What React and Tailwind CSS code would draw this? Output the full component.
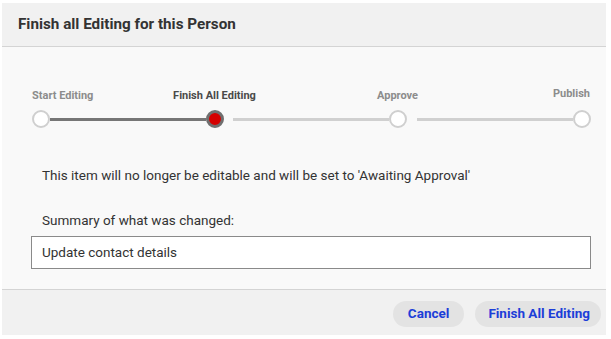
const steps = [
  { label: "Start Editing", state: "done" },
  { label: "Finish All Editing", state: "current" },
  { label: "Approve", state: "todo" },
  { label: "Publish", state: "todo" },
];

const Circle = ({ state }) => {
  if (state === "current") {
    return (
      <div className="w-[18px] h-[18px] rounded-full border-[3px] border-[#6f6f6f] bg-[#d40000] shrink-0" />
    );
  }
  return (
    <div className="w-[18px] h-[18px] rounded-full border-2 border-[#cfcfcf] bg-white shrink-0" />
  );
};

const App = () => {
  return (
    <div
      className="w-[611px] h-[339px] bg-white pt-[3px] pl-[2px]"
      style={{ fontFamily: "Roboto, 'Liberation Sans', sans-serif" }}
    >
      <div className="w-[604px] h-[332px] flex flex-col">
        <div className="h-[44px] bg-[#f1f1f1] border-b border-[#d4d4d4] flex items-center pl-[16px]">
          <h2 className="text-[15.25px] font-bold text-[#333]">
            Finish all Editing for this Person
          </h2>
        </div>

        <div className="h-[243px] bg-[#f9f9f9] border-b border-[#d4d4d4] pt-[42px]">
          <div className="flex pl-[30px] text-[11px] font-bold leading-[13px]">
            <div className="w-[91px] text-left text-[#8c8c8c]">{steps[0].label}</div>
            <div className="w-[183px] text-center text-[#4a4a4a]">{steps[1].label}</div>
            <div className="w-[183px] text-center text-[#8c8c8c]">{steps[2].label}</div>
            <div className="w-[101px] text-right text-[#8c8c8c] -mt-[2px]">{steps[3].label}</div>
          </div>

          <div className="flex items-center pl-[30px] mt-[8px]">
            <Circle state={steps[0].state} />
            <div className="w-[156px] h-[3px] bg-[#767676]" />
            <Circle state={steps[1].state} />
            <div className="ml-[9px] w-[156px] h-[3px] bg-[#d0d0d0]" />
            <Circle state={steps[2].state} />
            <div className="ml-[10px] w-[156px] h-[3px] bg-[#d0d0d0]" />
            <Circle state={steps[3].state} />
          </div>

          <p className="mt-[39px] pl-[40px] text-[13.5px] text-[#333] leading-[16px]">
            This item will no longer be editable and will be set to 'Awaiting Approval'
          </p>

          <p className="mt-[29px] pl-[40px] text-[13.5px] text-[#333] leading-[16px]">
            Summary of what was changed:
          </p>

          <div className="mt-[8px] ml-[29px] w-[560px] h-[33px] border border-[#8a8a8a] bg-white flex items-center pl-[10px] text-[13.5px] text-[#333]">
            Update contact details
          </div>
        </div>

        <div className="flex-1 bg-[#f1f1f1] flex items-center justify-end gap-[11px] pr-[5px] pt-[2px]">
          <button className="h-[26px] px-[15px] rounded-full bg-[#e3e3e3] text-[13.5px] font-bold text-[#1c3ed8]">
            Cancel
          </button>
          <button className="h-[26px] pl-[13px] pr-[11px] rounded-full bg-[#e3e3e3] text-[13.5px] font-bold text-[#1c3ed8]">
            Finish All Editing
          </button>
        </div>
      </div>
    </div>
  );
};

export default App;
